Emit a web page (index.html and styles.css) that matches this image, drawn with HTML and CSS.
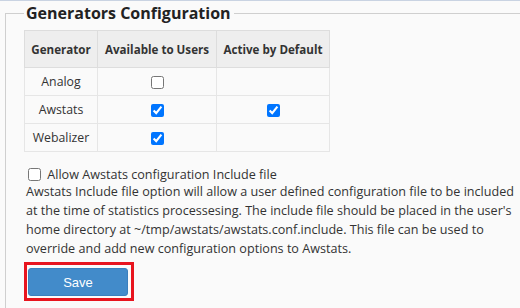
FILE: index.html
```html
<!DOCTYPE html>
<html>
<head>
<meta charset="utf-8">
<link rel="stylesheet" href="styles.css">
</head>
<body>
<div class="topline"></div>
<fieldset class="box">
  <legend class="title">Generators Configuration</legend>
  <table class="gen">
    <colgroup><col class="c1"><col class="c2"><col class="c3"></colgroup>
    <thead>
      <tr><th>Generator</th><th>Available to Users</th><th>Active by Default</th></tr>
    </thead>
    <tbody>
      <tr><td>Analog</td><td><input type="checkbox"></td><td></td></tr>
      <tr><td>Awstats</td><td><input type="checkbox" checked></td><td><input type="checkbox" checked></td></tr>
      <tr><td>Webalizer</td><td><input type="checkbox" checked></td><td></td></tr>
    </tbody>
  </table>
  <div class="include">
    <label class="chk"><input type="checkbox"> Allow Awstats configuration Include file</label>
    <p class="desc">Awstats Include file option will allow a user defined configuration file to be included at the time of statistics processesing. The include file should be placed in the user's home directory at ~/tmp/awstats/awstats.conf.include. This file can be used to override and add new configuration options to Awstats.</p>
  </div>
  <div class="actions">
    <div class="highlight"><button class="save">Save</button></div>
  </div>
</fieldset>
</body>
</html>
```

FILE: styles.css
```css
html, body {
  margin: 0;
  padding: 0;
  background: #fafafa;
  font-family: "Open Sans", sans-serif;
  color: #333;
}
.topline {
  height: 1px;
  background: #c9d3e2;
}
.box {
  margin: 0 0 0 5px;
  border: 1px solid #cfcfcf;
  border-right: none;
  border-bottom: none;
  padding: 0 6px 0 18px;
  min-width: 0;
}
.title {
  font-size: 16px;
  font-weight: 700;
  color: #222;
  padding: 0 3px 0 2px;
  margin-left: 0;
  line-height: 24px;
}
.gen {
  border-collapse: collapse;
  table-layout: fixed;
  width: 305px;
  margin-top: 5px;
}
.c1 { width: 73px; }
.c2 { width: 119px; }
.c3 { width: 113px; }
.gen th {
  background: #eeeeee;
  font-weight: 700;
  font-size: 11.6px;
  color: #333;
  height: 36px;
  padding: 0;
  border: 1px solid #dddddd;
  white-space: nowrap;
}
.gen td {
  height: 27px;
  border: 1px solid #e6e6e6;
  text-align: center;
  padding: 0;
  font-size: 12.3px;
}
input[type=checkbox] {
  width: 13px;
  height: 13px;
  margin: 0;
  vertical-align: middle;
}
.include {
  margin-top: 15px;
  margin-left: 2px;
  font-size: 12.6px;
  line-height: 19px;
}
.chk {
  display: block;
  padding-left: 2px;
  line-height: 15px;
}
.chk input { margin-top: -3px; margin-right: 3px; }
.desc {
  margin: 0;
}
.actions {
  margin-top: 4px;
  padding-bottom: 10px;
}
.highlight {
  display: inline-block;
  border: 3px solid #e8141e;
  padding: 3px 3px 2px 1px;
}
.save {
  display: block;
  width: 100px;
  height: 28px;
  background: #428bca;
  border: 1px solid #3a7fbd;
  border-radius: 3px;
  color: #fff;
  font-family: "Liberation Sans", Arial, sans-serif;
  font-weight: 400;
  font-size: 13px;
}
```
